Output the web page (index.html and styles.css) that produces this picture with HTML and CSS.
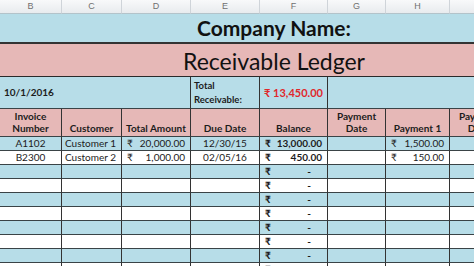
FILE: index.html
```html
<!DOCTYPE html>
<html>
<head>
<meta charset="utf-8">
<link rel="stylesheet" href="styles.css">
</head>
<body>
<div class="sheet">
  <div class="colhead">B</div>
  <div class="colhead">C</div>
  <div class="colhead">D</div>
  <div class="colhead">E</div>
  <div class="colhead">F</div>
  <div class="colhead">G</div>
  <div class="colhead">H</div>
  <div class="colhead"></div>

  <div class="banner title">Company Name:</div>
  <div class="banner subtitle">Receivable Ledger</div>

  <div class="c info date">10/1/2016</div>
  <div class="c info total-label">Total<br>Receivable:</div>
  <div class="c info total-value">₹ 13,450.00</div>
  <div class="c info rest"></div>

  <div class="c head">Invoice<br>Number</div>
  <div class="c head">Customer</div>
  <div class="c head">Total Amount</div>
  <div class="c head">Due Date</div>
  <div class="c head">Balance</div>
  <div class="c head">Payment<br>Date</div>
  <div class="c head">Payment 1</div>
  <div class="c head">Payment<br>Date</div>

  <div class="c blue center">A1102</div>
  <div class="c blue text">Customer 1</div>
  <div class="c blue money"><span>₹</span><span>20,000.00</span></div>
  <div class="c blue center">12/30/15</div>
  <div class="c blue money strong"><span>₹</span><span>13,000.00</span></div>
  <div class="c blue"></div>
  <div class="c blue money"><span>₹</span><span>1,500.00</span></div>
  <div class="c blue"></div>

  <div class="c white center">B2300</div>
  <div class="c white text">Customer 2</div>
  <div class="c white money"><span>₹</span><span>1,000.00</span></div>
  <div class="c white center">02/05/16</div>
  <div class="c white money strong"><span>₹</span><span>450.00</span></div>
  <div class="c white"></div>
  <div class="c white money"><span>₹</span><span>150.00</span></div>
  <div class="c white"></div>

  <div class="c blue"></div><div class="c blue"></div><div class="c blue"></div><div class="c blue"></div>
  <div class="c blue money strong"><span>₹</span><span class="dash">-</span></div>
  <div class="c blue"></div><div class="c blue"></div><div class="c blue"></div>

  <div class="c white"></div><div class="c white"></div><div class="c white"></div><div class="c white"></div>
  <div class="c white money strong"><span>₹</span><span class="dash">-</span></div>
  <div class="c white"></div><div class="c white"></div><div class="c white"></div>

  <div class="c blue"></div><div class="c blue"></div><div class="c blue"></div><div class="c blue"></div>
  <div class="c blue money strong"><span>₹</span><span class="dash">-</span></div>
  <div class="c blue"></div><div class="c blue"></div><div class="c blue"></div>

  <div class="c white"></div><div class="c white"></div><div class="c white"></div><div class="c white"></div>
  <div class="c white money strong"><span>₹</span><span class="dash">-</span></div>
  <div class="c white"></div><div class="c white"></div><div class="c white"></div>

  <div class="c blue"></div><div class="c blue"></div><div class="c blue"></div><div class="c blue"></div>
  <div class="c blue money strong"><span>₹</span><span class="dash">-</span></div>
  <div class="c blue"></div><div class="c blue"></div><div class="c blue"></div>

  <div class="c white"></div><div class="c white"></div><div class="c white"></div><div class="c white"></div>
  <div class="c white money strong"><span>₹</span><span class="dash">-</span></div>
  <div class="c white"></div><div class="c white"></div><div class="c white"></div>

  <div class="c blue"></div><div class="c blue"></div><div class="c blue"></div><div class="c blue"></div>
  <div class="c blue money strong"><span>₹</span><span class="dash">-</span></div>
  <div class="c blue"></div><div class="c blue"></div><div class="c blue"></div>

  <div class="c white"></div><div class="c white"></div><div class="c white"></div><div class="c white"></div>
  <div class="c white money strong"><span>₹</span><span class="dash">-</span></div>
  <div class="c white"></div><div class="c white"></div><div class="c white"></div>
</div>
</body>
</html>
```

FILE: styles.css
```css
html, body {
  margin: 0;
  padding: 0;
  background: #ffffff;
}

body {
  width: 474px;
  height: 266px;
  overflow: hidden;
  font-family: Lato, "Noto Sans", "DejaVu Sans", sans-serif;
  color: #1c1c1c;
}

.sheet {
  display: grid;
  grid-template-columns: 62px 60px 69px 69px 68px 58px 64px 58px;
  grid-template-rows: 14px 30px 33px 32px 28px repeat(10, 14px);
  width: 508px;
}

.colhead {
  background: linear-gradient(#f8f9fa, #e8ebee);
  border-right: 1px solid #cfd4d9;
  border-bottom: 1px solid #b3c3ca;
  color: #707070;
  font-family: "Liberation Sans", Arial, sans-serif;
  font-size: 9px;
  line-height: 13px;
  text-align: center;
  box-sizing: border-box;
}

.banner {
  grid-column: 1 / -1;
  display: flex;
  align-items: flex-end;
  justify-content: center;
  padding-left: 40px;
  box-sizing: border-box;
  border-bottom: 1px solid #2a2a2a;
  color: #111;
  white-space: nowrap;
}

.title {
  background: #b7dde8;
  font-weight: bold;
  font-size: 21px;
  line-height: 24px;
  padding-bottom: 2px;
  border-bottom: 2px solid #333;
}

.subtitle {
  background: #e6b8b7;
  font-size: 23px;
  line-height: 26px;
  padding-bottom: 2px;
}

.c {
  box-sizing: border-box;
  border-right: 1px solid #333;
  border-bottom: 1px solid #3a4346;
  overflow: hidden;
  white-space: nowrap;
  font-size: 10px;
  line-height: 13px;
}

.info {
  background: #b7dde8;
  font-weight: bold;
  display: flex;
  align-items: center;
}

.date {
  grid-column: span 3;
  padding-left: 4px;
}

.total-label {
  font-size: 9.5px;
  line-height: 14px;
  padding-left: 3px;
}

.total-value {
  color: #e0282c;
  font-size: 11px;
  padding-left: 4px;
}

.rest {
  grid-column: span 3;
}

.head {
  background: #e6b8b7;
  font-weight: bold;
  text-align: center;
  display: flex;
  align-items: flex-end;
  justify-content: center;
  line-height: 12px;
  padding-bottom: 2px;
}

.blue {
  background: #b7dde8;
}

.white {
  background: #ffffff;
}

.center {
  text-align: center;
}

.text {
  padding-left: 3px;
}

.money {
  display: flex;
  justify-content: space-between;
  padding: 0 5px 0 5px;
}

.strong {
  font-weight: bold;
}

.dash {
  padding-right: 11px;
}
```
